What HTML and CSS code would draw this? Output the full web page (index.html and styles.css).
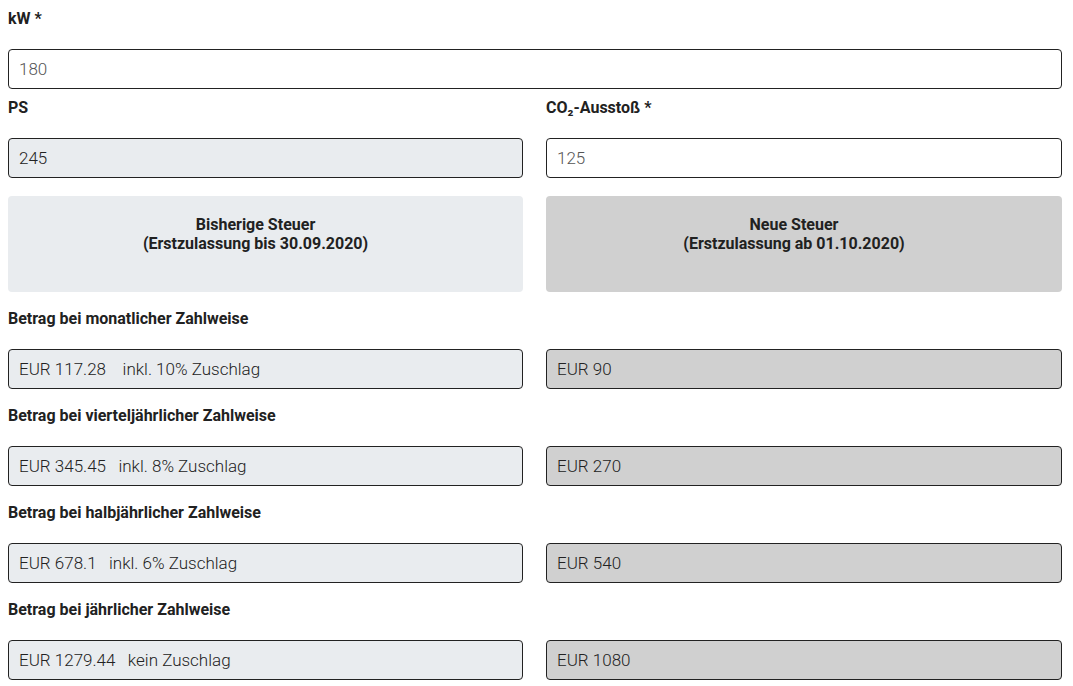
FILE: index.html
```html
<!DOCTYPE html>
<html lang="de">

<head>
    <meta charset="UTF-8">
    <meta name="viewport" content="width=device-width, initial-scale=1.0">
    <title>Kfz-Steuer Rechner</title>
    <link rel="stylesheet" href="styles.css">
</head>

<body>
    <div class="calc">
        <!-- Eingaben -->
        <div class="field">
            <label for="kw">kW *</label>
            <input id="kw" class="input" type="text" value="180">
        </div>

        <div class="row top-row">
            <div class="field">
                <label for="ps">PS</label>
                <input id="ps" class="input old" type="text" value="245" readonly>
            </div>
            <div class="field">
                <label for="co2">CO₂-Ausstoß *</label>
                <input id="co2" class="input" type="text" value="125">
            </div>
        </div>

        <!-- Überschriften -->
        <div class="row box-row">
            <div class="tax-box old">Bisherige Steuer<br>(Erstzulassung bis 30.09.2020)</div>
            <div class="tax-box new">Neue Steuer<br>(Erstzulassung ab 01.10.2020)</div>
        </div>

        <!-- Ergebnisse -->
        <div class="result">
            <label>Betrag bei monatlicher Zahlweise</label>
            <div class="row">
                <input class="input old" type="text" value="EUR 117.28    inkl. 10% Zuschlag" readonly>
                <input class="input new" type="text" value="EUR 90" readonly>
            </div>
        </div>

        <div class="result">
            <label>Betrag bei vierteljährlicher Zahlweise</label>
            <div class="row">
                <input class="input old" type="text" value="EUR 345.45   inkl. 8% Zuschlag" readonly>
                <input class="input new" type="text" value="EUR 270" readonly>
            </div>
        </div>

        <div class="result">
            <label>Betrag bei halbjährlicher Zahlweise</label>
            <div class="row">
                <input class="input old" type="text" value="EUR 678.1   inkl. 6% Zuschlag" readonly>
                <input class="input new" type="text" value="EUR 540" readonly>
            </div>
        </div>

        <div class="result">
            <label>Betrag bei jährlicher Zahlweise</label>
            <div class="row">
                <input class="input old" type="text" value="EUR 1279.44   kein Zuschlag" readonly>
                <input class="input new" type="text" value="EUR 1080" readonly>
            </div>
        </div>
    </div>
</body>

</html>
```

FILE: styles.css
```css
/* Allgemein */
body {
    font-family: Roboto, Arial, sans-serif;
    margin: 8px;
    background-color: #fff;
    color: #212121;
}

.calc {
    width: 1054px;
    padding-top: 1px;
}

label {
    display: block;
    font-size: 16px;
    font-weight: bold;
    line-height: 20px;
    margin-bottom: 20px;
    color: #212121;
}

/* Eingabefelder */
.input {
    display: block;
    box-sizing: border-box;
    width: 100%;
    height: 40px;
    margin: 0;
    padding: 0 10px;
    border: 1px solid #222;
    border-radius: 4px;
    background-color: #fff;
    font-family: Roboto, Arial, sans-serif;
    font-size: 17px;
    font-weight: 300;
    color: #555;
    white-space: pre;
    outline: none;
}

.input.old {
    background-color: #e9ecef;
    color: #222;
}

.input.new {
    background-color: #d0d0d0;
    color: #222;
}

/* Zeilen */
.row {
    display: grid;
    grid-template-columns: 515px 1fr;
    column-gap: 23px;
}

.top-row {
    margin-top: 9px;
}

.box-row {
    margin-top: 18px;
}

.tax-box {
    height: 96px;
    box-sizing: border-box;
    padding: 19px 20px 0 0;
    border-radius: 4px;
    text-align: center;
    font-size: 16px;
    font-weight: bold;
    line-height: 19px;
    color: #212121;
}

.tax-box.old {
    background-color: #e9ecef;
}

.tax-box.new {
    background-color: #d0d0d0;
}

.result {
    margin-top: 17px;
}
```
